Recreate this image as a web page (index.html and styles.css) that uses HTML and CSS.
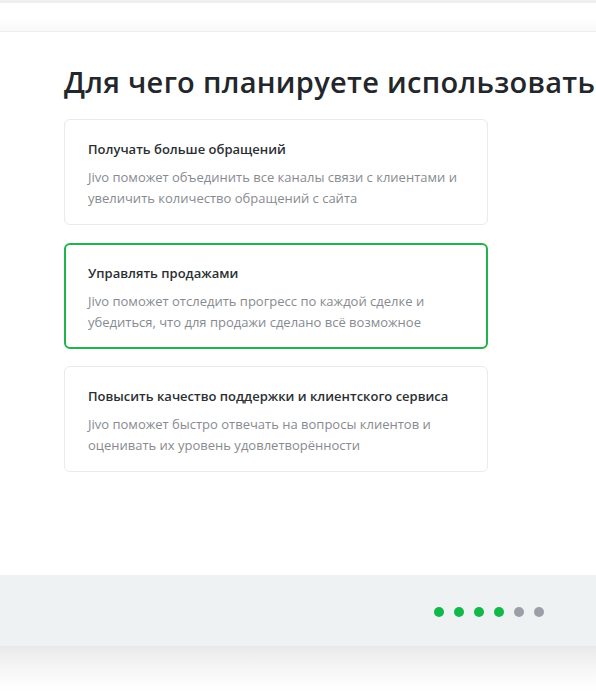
FILE: index.html
```html
<!DOCTYPE html>
<html lang="ru">
<head>
<meta charset="utf-8">
<title>Jivo</title>
<link rel="stylesheet" href="styles.css">
</head>
<body>
<div class="top-strip"></div>
<div class="header"></div>
<main class="content">
  <h1 class="title">Для чего планируете использовать</h1>
  <div class="options">
    <div class="card">
      <div class="card-title">Получать больше обращений</div>
      <div class="card-text">Jivo поможет объединить все каналы связи с клиентами и увеличить количество обращений с сайта</div>
    </div>
    <div class="card card-selected">
      <div class="card-title">Управлять продажами</div>
      <div class="card-text">Jivo поможет отследить прогресс по каждой сделке и убедиться, что для продажи сделано всё возможное</div>
    </div>
    <div class="card">
      <div class="card-title">Повысить качество поддержки и клиентского сервиса</div>
      <div class="card-text">Jivo поможет быстро отвечать на вопросы клиентов и оценивать их уровень удовлетворённости</div>
    </div>
  </div>
</main>
<footer class="footer">
  <div class="dots">
    <span class="dot dot-done"></span>
    <span class="dot dot-done"></span>
    <span class="dot dot-done"></span>
    <span class="dot dot-done"></span>
    <span class="dot"></span>
    <span class="dot"></span>
  </div>
</footer>
<div class="footer-shadow"></div>
</body>
</html>
```
FILE: styles.css
```css
html, body {
  margin: 0;
  padding: 0;
  background: #ffffff;
  overflow: hidden;
}
body {
  width: 596px;
  height: 700px;
  font-family: "Open Sans", "Noto Sans", sans-serif;
  color: #262b30;
}
.top-strip {
  height: 3px;
  background: #efefef;
}
.header {
  height: 28px;
  background: linear-gradient(to bottom, #ffffff 55%, #f8f8f8 100%);
  border-bottom: 1px solid #ededed;
}
.content {
  height: 543px;
  padding: 0 0 0 64px;
  overflow: hidden;
}
.title {
  margin: 30px 0 0 0;
  font-size: 29px;
  line-height: 40px;
  font-weight: 600;
  white-space: nowrap;
  color: #23272b;
  letter-spacing: 0.3px;
}
.options {
  display: flex;
  flex-direction: column;
  gap: 17.5px;
  margin-top: 17px;
  width: 424px;
}
.card {
  box-sizing: border-box;
  height: 106px;
  border: 1px solid #e8eaeb;
  border-radius: 6px;
  padding: 20px 23px 14px 23px;
  background: #ffffff;
}
.card-selected {
  border: 2px solid #20b54c;
  padding: 19px 22px 13px 22px;
}
.card-title {
  font-size: 13px;
  line-height: 18px;
  font-weight: 600;
  color: #2b2f33;
}
.card-text {
  margin-top: 9px;
  font-size: 13px;
  line-height: 21px;
  color: #878b90;
}
.footer {
  height: 71px;
  background: #eef2f3;
  display: flex;
  align-items: center;
  justify-content: flex-end;
  padding-right: 52px;
}
.dots {
  display: flex;
  gap: 10px;
  margin-top: 2px;
}
.dot {
  width: 10px;
  height: 10px;
  border-radius: 50%;
  background: #9aa0a6;
}
.dot-done {
  background: #13b84a;
}
.footer-shadow {
  height: 45px;
  background: linear-gradient(to bottom, #e9e9e9 0%, #f6f6f6 50%, #ffffff 100%);
}
```
